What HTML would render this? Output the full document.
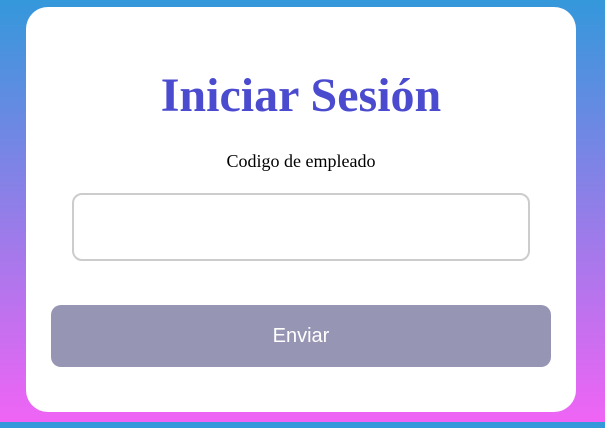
<!DOCTYPE html>
<html><head><style>
html,body{margin:0;padding:0;width:605px;height:428px;overflow:hidden}
body{background:#3498db;position:relative}
.bg{position:absolute;left:0;top:0;width:605px;height:422px;background:linear-gradient(#3498db,#f064f5)}
.card{position:absolute;left:26px;top:7px;width:550px;height:405px;background:#fff;border-radius:22px}
h1{position:absolute;left:0;width:550px;top:63px;margin:0;text-align:center;font:bold 48px "Liberation Serif",serif;color:#4b4bcf;line-height:52px}
.lbl{position:absolute;left:0;width:550px;top:144px;text-align:center;font:18px "Liberation Serif",serif;color:#000}
.inp{position:absolute;left:46px;top:186px;width:454px;height:64px;border:2px solid #ccc;border-radius:10px;box-sizing:content-box}
.btn{position:absolute;left:25px;top:298px;width:500px;height:62px;background:#9696b4;border-radius:10px;color:#fff;font:20px "Liberation Sans",sans-serif;text-align:center;line-height:62px}
</style></head><body>
<div class="bg"></div>
<div class="card">
<h1>Iniciar Sesión</h1>
<div class="lbl">Codigo de empleado</div>
<div class="inp"></div>
<div class="btn">Enviar</div>
</div>
</body></html>
